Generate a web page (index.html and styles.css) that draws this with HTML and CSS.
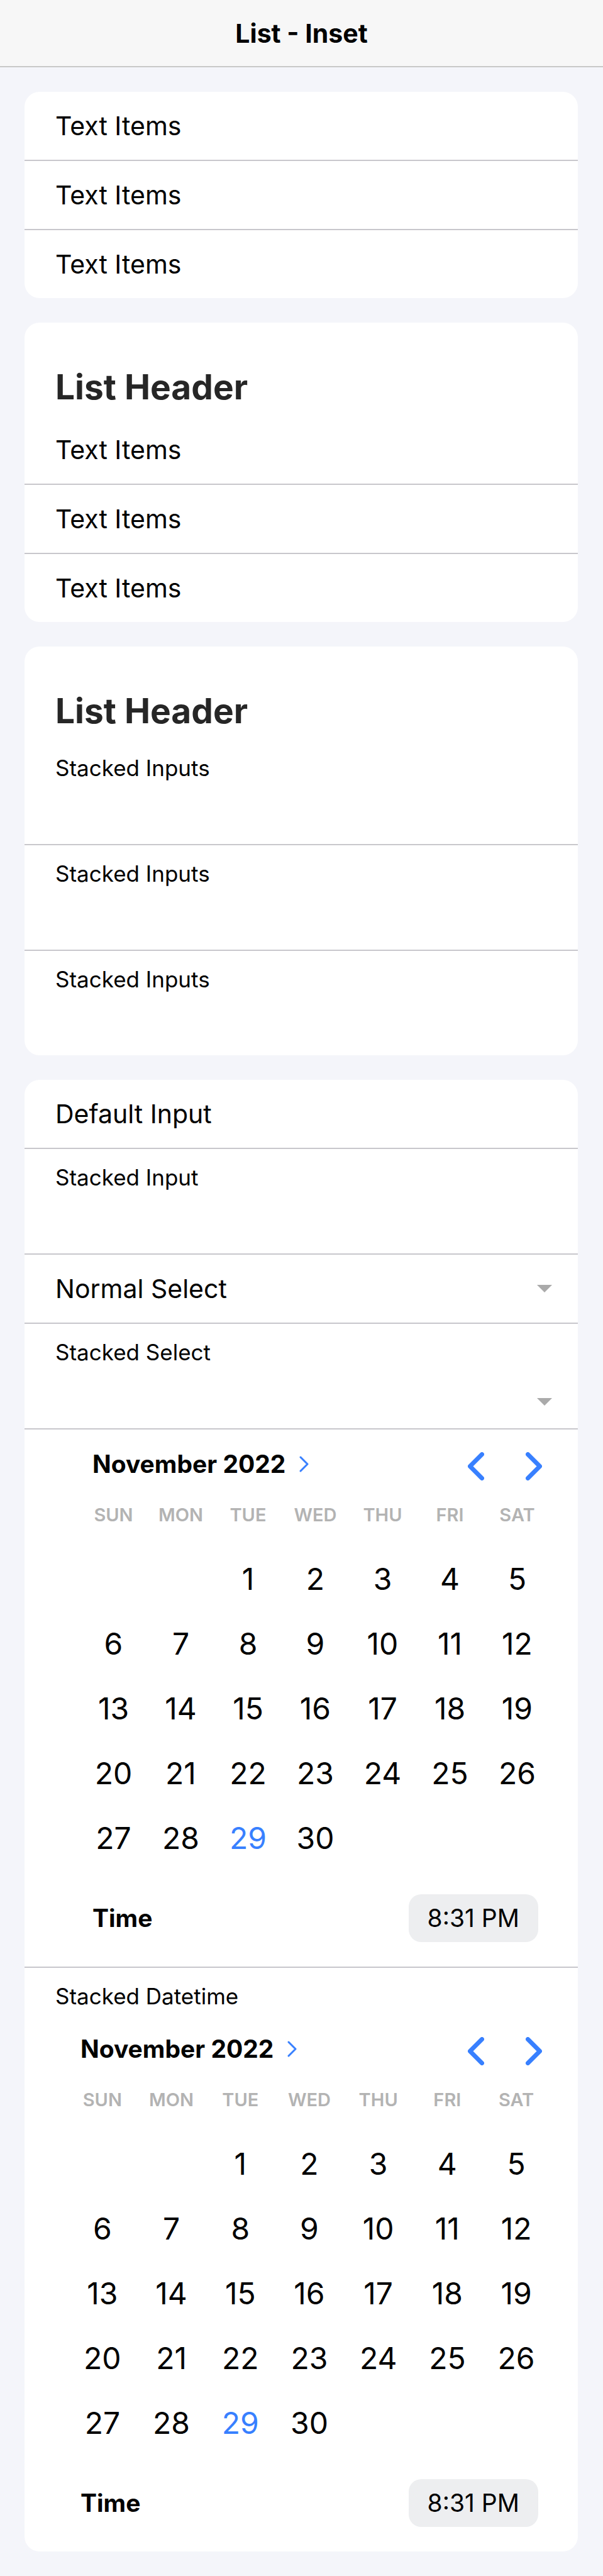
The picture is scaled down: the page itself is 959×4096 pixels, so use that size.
FILE: index.html
```html
<!DOCTYPE html>
<html lang="en">
<head>
<meta charset="utf-8">
<meta name="viewport" content="width=device-width, initial-scale=1">
<title>List - Inset</title>
<link rel="stylesheet" href="styles.css">
</head>
<body>
<header class="toolbar"><h1 class="toolbar-title">List - Inset</h1></header>
<main class="content">
  <ul class="list">
    <li class="item">Text Items</li>
    <li class="item">Text Items</li>
    <li class="item">Text Items</li>
  </ul>

  <section class="list">
    <h2 class="list-header">List Header</h2>
    <ul class="plain">
      <li class="item">Text Items</li>
      <li class="item">Text Items</li>
      <li class="item">Text Items</li>
    </ul>
  </section>

  <section class="list">
    <h2 class="list-header">List Header</h2>
    <div class="item stacked"><label for="s1">Stacked Inputs</label><input id="s1" class="field" type="text"></div>
    <div class="item stacked"><label for="s2">Stacked Inputs</label><input id="s2" class="field" type="text"></div>
    <div class="item stacked"><label for="s3">Stacked Inputs</label><input id="s3" class="field" type="text"></div>
  </section>

  <form class="list">
    <div class="item"><label for="d1">Default Input</label><input id="d1" class="field" type="text"></div>
    <div class="item stacked"><label for="s4">Stacked Input</label><input id="s4" class="field" type="text"></div>
    <div class="item">
      <label for="n1">Normal Select</label>
      <select id="n1" class="field"><option></option></select>
      <svg class="caret" viewBox="0 0 24 12" aria-hidden="true"><path d="M0 0h24L12 12z"/></svg>
    </div>
    <div class="item stacked">
      <label for="n2">Stacked Select</label>
      <div class="select-row">
        <select id="n2" class="field"><option></option></select>
        <svg class="caret" viewBox="0 0 24 12" aria-hidden="true"><path d="M0 0h24L12 12z"/></svg>
      </div>
    </div>
    <div class="item-date">
      <div class="datetime indented" data-calendar></div>
    </div>
    <div class="item-date">
      <p class="date-label" id="dt">Stacked Datetime</p>
      <div class="datetime" data-calendar role="group" aria-labelledby="dt"></div>
    </div>
  </form>
</main>

<template id="calendar">
  <div class="cal-head">
    <button type="button" class="month">November 2022
      <svg class="chev-small" viewBox="0 0 15 26" aria-hidden="true"><path d="M2 2l11 11L2 24"/></svg>
    </button>
    <div class="cal-nav">
      <button type="button" aria-label="Previous month"><svg class="chev" viewBox="0 0 26 45" aria-hidden="true"><path d="M22.5 3.5l-19 19 19 19"/></svg></button>
      <button type="button" aria-label="Next month"><svg class="chev" viewBox="0 0 26 45" aria-hidden="true"><path d="M3.5 3.5l19 19-19 19"/></svg></button>
    </div>
  </div>
  <table class="days">
    <thead><tr><th>SUN</th><th>MON</th><th>TUE</th><th>WED</th><th>THU</th><th>FRI</th><th>SAT</th></tr></thead>
    <tbody></tbody>
  </table>
  <div class="time-row"><span class="time-label">Time</span><button type="button" class="time">8:31 PM</button></div>
</template>
<script src="calendar.js"></script>
</body>
</html>
```

FILE: styles.css
```css
* { box-sizing: border-box; margin: 0; padding: 0; }

body {
  background: #f4f5fa;
  color: #000;
  font-family: Inter, "Liberation Sans", sans-serif;
  font-size: 41px;
  line-height: 48px;
}

button, input, select { font: inherit; color: inherit; background: none; border: 0; outline: 0; }
button { display: flex; align-items: center; justify-content: center; cursor: pointer; }

.toolbar {
  display: flex;
  align-items: center;
  justify-content: center;
  height: 107px;
  background: #f7f7f7;
  border-bottom: 2px solid #c8c8c8;
}
.toolbar-title { font-size: 41px; font-weight: 700; }

.content { display: flex; flex-direction: column; gap: 39px; padding: 39px 40px 39px 39px; }

.list { background: #fff; border-radius: 24px; overflow: hidden; list-style: none; }
.plain { list-style: none; }
.list-header { padding: 70px 49px 14px; font-size: 55px; line-height: 64px; font-weight: 700; color: #262626; }

.item {
  display: flex;
  align-items: center;
  min-height: 110px;
  padding: 0 41px 0 49px;
  border-bottom: 2px solid #c8c7cc;
}
.item:last-child { min-height: 108px; border-bottom: 0; }
.item .field { flex: 1; min-width: 0; appearance: none; }

.stacked { flex-direction: column; align-items: stretch; min-height: 168px; padding-top: 24px; }
.stacked:last-child { min-height: 166px; }
.stacked label, .date-label { font-size: 35px; line-height: 42px; }

.select-row { display: flex; flex: 1; align-items: center; padding-top: 16px; }
.caret { width: 24px; height: 12px; fill: #aaa; }

.item-date { border-bottom: 2px solid #c8c7cc; padding: 0 43px 0 49px; }
.item-date:last-child { border-bottom: 0; }
.date-label { padding: 24px 0 8px; }

.datetime { padding-left: 20px; font-size: 39px; }
.indented { padding-left: 39px; }

.cal-head { display: flex; justify-content: space-between; align-items: center; height: 98px; padding: 18px 14px 0 20px; }
.month { gap: 22px; padding-bottom: 6px; font-weight: 700; }
.cal-nav { display: flex; gap: 66px; }
.chev { width: 26px; height: 45px; fill: none; stroke: #3880ff; stroke-width: 7; stroke-linecap: round; stroke-linejoin: round; }
.chev-small { width: 15px; height: 26px; fill: none; stroke: #3880ff; stroke-width: 3; stroke-linecap: round; stroke-linejoin: round; }

.days { width: 100%; table-layout: fixed; border-collapse: collapse; }
.days th { height: 88px; padding-bottom: 12px; font-size: 29px; font-weight: 600; color: #b3b3b3; }
.days td { height: 103px; }
.days button { width: 100%; height: 100px; font-size: 48px; }
.days .today { color: #3880ff; }

.time-row { display: flex; justify-content: space-between; align-items: center; padding: 38px 20px 39px; }
.time-label { font-weight: 700; }
.time { height: 76px; padding: 0 30px; border-radius: 20px; background: #edeef0; }
```

FILE: calendar.js
```js
const firstWeekday = 2;
const dayCount = 30;
const today = 29;

for (const host of document.querySelectorAll("[data-calendar]")) {
  host.append(document.getElementById("calendar").content.cloneNode(true));
  const body = host.querySelector("tbody");
  for (let start = 1 - firstWeekday; start <= dayCount; start += 7) {
    const row = body.insertRow();
    for (let day = start; day < start + 7; day++) {
      const cell = row.insertCell();
      if (day < 1 || day > dayCount) continue;
      const button = document.createElement("button");
      button.type = "button";
      button.textContent = day;
      if (day === today) button.className = "today";
      cell.append(button);
    }
  }
}
```
